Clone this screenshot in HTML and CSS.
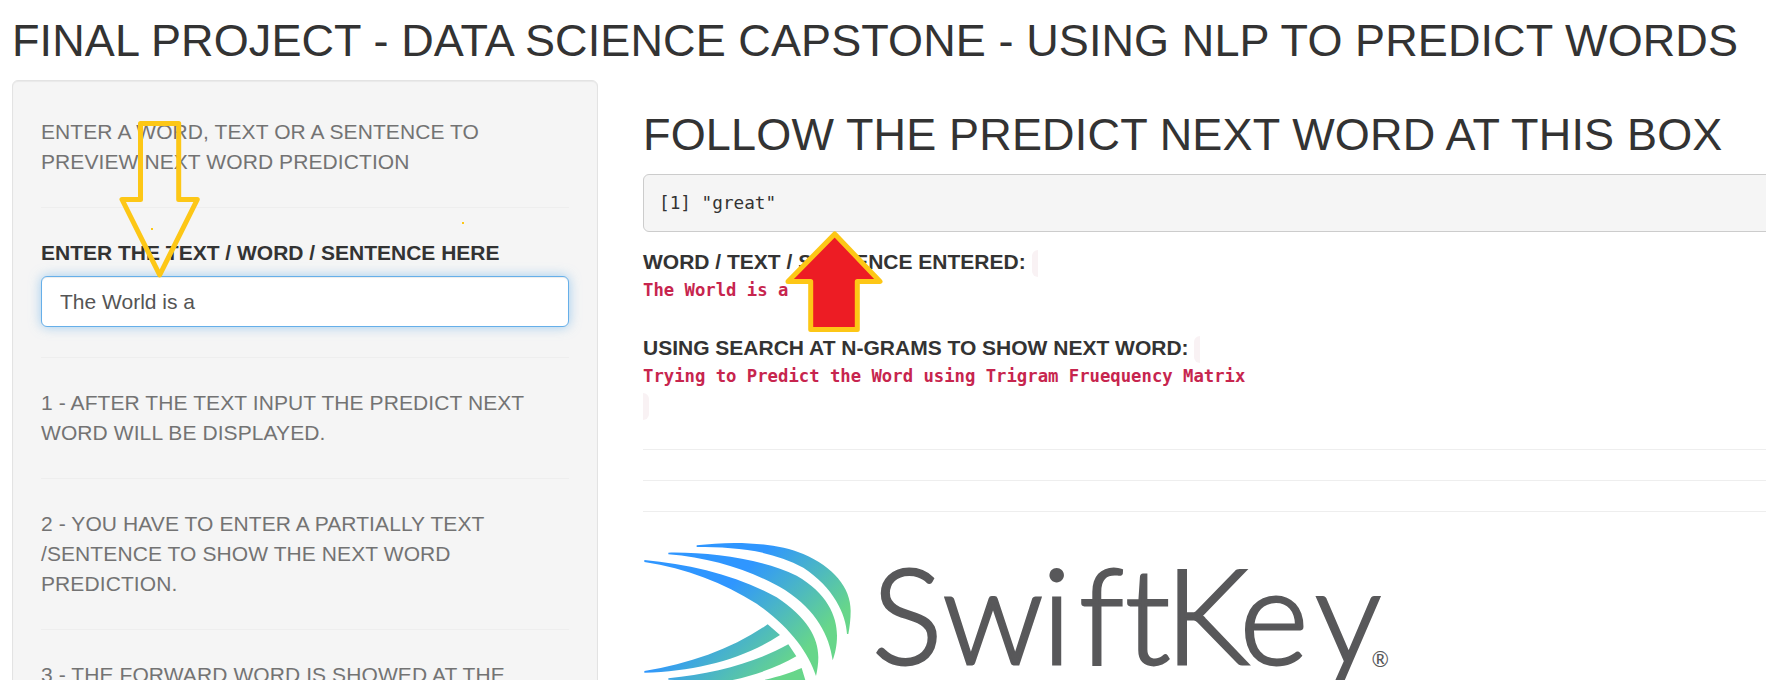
FILE: index.html
```html
<!DOCTYPE html>
<html lang="en">
<head>
<meta charset="utf-8">
<title>Final Project - Data Science Capstone</title>
<link rel="stylesheet" href="styles.css">
</head>
<body>
<div class="page">
  <h1 class="title">FINAL PROJECT - DATA SCIENCE CAPSTONE - USING NLP TO PREDICT WORDS</h1>
  <div class="columns">
    <aside class="sidebar">
      <p class="help">ENTER A WORD, TEXT OR A SENTENCE TO<br>PREVIEW NEXT WORD PREDICTION</p>
      <hr class="rule">
      <label class="label" for="entry">ENTER THE TEXT / WORD / SENTENCE HERE</label>
      <input class="entry" id="entry" type="text" value="The World is a">
      <hr class="rule">
      <p class="help">1 - AFTER THE TEXT INPUT THE PREDICT NEXT<br>WORD WILL BE DISPLAYED.</p>
      <hr class="rule">
      <p class="help">2 - YOU HAVE TO ENTER A PARTIALLY TEXT<br>/SENTENCE TO SHOW THE NEXT WORD<br>PREDICTION.</p>
      <hr class="rule">
      <p class="help">3 - THE FORWARD WORD IS SHOWED AT THE</p>
    </aside>
    <main class="main">
      <h1 class="heading">FOLLOW THE PREDICT NEXT WORD AT THIS BOX</h1>
      <pre class="output">[1] "great"</pre>
      <div class="result">
        <div class="name">WORD / TEXT / SENTENCE ENTERED: <span class="cap"></span></div>
        <code class="value">The World is a</code>
      </div>
      <div class="result">
        <div class="name">USING SEARCH AT N-GRAMS TO SHOW NEXT WORD: <span class="cap"></span></div>
        <code class="value">Trying to Predict the Word using Trigram Fruequency Matrix</code>
        <div class="tail"><span class="cap cap-end"></span></div>
      </div>
      <hr class="line">
      <hr class="line">
      <hr class="line">
      <svg class="logo" width="760" height="145" viewBox="643 540 760 145">
        <defs>
          <linearGradient id="sea" gradientUnits="userSpaceOnUse" x1="250" y1="250" x2="460" y2="460">
            <stop offset="0" stop-color="#2f96ff"/>
            <stop offset="1" stop-color="#67d68a"/>
          </linearGradient>
        </defs>
        <g transform="translate(630 520) scale(.33333)" fill="url(#sea)">
          <path d="M200 79C300 66 430 68 520 105C610 144 662 205 662 275C662 300 659 325 655 345L651 345C648 285 610 205 520 146C420 92 310 84 200 84Z"/>
          <path d="M115 101C240 99 390 118 500 170C590 221 621 290 621 350C621 380 615 405 608 424C598 350 560 275 465 213C370 157 250 117 115 106Z"/>
          <path d="M43 123C180 135 330 172 440 235C530 295 565 355 565 415C565 435 562 455 558 471C535 400 480 325 380 254C280 192 170 148 43 129Z"/>
          <path d="M43 456C180 434 310 388 413 316L450 348C340 420 200 456 43 461Z"/>
          <path d="M115 478C250 465 380 430 475 376L499 412C440 446 360 476 270 490L115 482Z"/>
          <path d="M405 482C450 472 485 460 515 447L528 490H405Z"/>
        </g>
        <g class="brand">
          <text y="665" x="872 942.500 1042 1079 1125 1165 1239.500 1315">SwiftKey</text>
          <text class="mark" x="1371.500" y="667.500">®</text>
        </g>
      </svg>
    </main>
  </div>
  <svg class="notes" width="1766" height="680" viewBox="0 0 1766 680">
    <path class="arrow" d="M140.500 123.500H178.700V199.500H197.300L159.700 275L122 199.500H140.500Z"/>
    <rect class="dot" x="151" y="228" width="2" height="2"/>
    <rect class="dot" x="462" y="222" width="2" height="2"/>
    <path class="arrow arrow-red" d="M834.700 234L880 281.500H857.300V329.500H810.700V281.500H788Z"/>
  </svg>
</div>
</body>
</html>
```
FILE: styles.css
```css
* { box-sizing: border-box; }
body {
  margin: 0;
  background: #fff;
  color: #333;
  font: 21px/30px "Liberation Sans", Arial, sans-serif;
}
.page {
  position: relative;
  width: 1766px;
  height: 680px;
  overflow: hidden;
  padding: 16px 0 0 12px;
}
.title, .heading {
  margin: 0;
  font-size: 45px;
  font-weight: 400;
  line-height: 50px;
  letter-spacing: .1px;
  white-space: nowrap;
}
.heading { letter-spacing: .17px; }
.columns {
  display: flex;
  align-items: flex-start;
  gap: 45px;
  padding-top: 14px;
}
.sidebar {
  flex: none;
  width: 586px;
  height: 640px;
  padding: 36px 28px;
  background: #f5f5f5;
  border: 1px solid #e3e3e3;
  border-radius: 6px;
  box-shadow: inset 0 1px 1px rgba(0, 0, 0, .05);
}
.help { margin: 0; color: #737373; letter-spacing: .09px; white-space: nowrap; }
.rule { margin: 30px 0; border: 0; border-top: 1px solid #eee; }
.label { display: block; margin-bottom: 8px; font-weight: 700; white-space: nowrap; }
.entry {
  display: block;
  width: 100%;
  height: 51px;
  padding: 0 18px;
  border: 1px solid #66afe9;
  border-radius: 6px;
  background: #fff;
  color: #555;
  font: 21px/30px "Liberation Sans", Arial, sans-serif;
  box-shadow: inset 0 1px 1px rgba(0, 0, 0, .075), 0 0 12px rgba(102, 175, 233, .6);
}
.main { flex: 1; min-width: 0; padding-top: 30px; }
.output {
  height: 58px;
  margin: 14px -20px 15px 0;
  padding: 13px 15px;
  background: #f5f5f5;
  border: 1px solid #ccc;
  border-radius: 6px;
  font: 17.700px/30px "DejaVu Sans Mono", monospace;
}
.result { margin-bottom: 28px; }
.name { height: 30px; font-weight: 700; }
.value {
  display: block;
  height: 28px;
  color: #c7254e;
  font: 700 17.260px/27px "DejaVu Sans Mono", monospace;
}
.tail { height: 31px; margin-top: -1px; }
.cap {
  display: inline-block;
  width: 6px;
  height: 27px;
  vertical-align: -8px;
  background: #f9f2f4;
  border-radius: 6px 0 0 6px;
}
.cap-end { border-radius: 0 6px 6px 0; }
.line { margin: 0 0 30px; border: 0; border-top: 1px solid #eee; }
.logo { display: block; margin-top: -3px; }
.brand { fill: #58585a; stroke: #58585a; stroke-width: 2.800; font: 300 132px Lato, sans-serif; }
.mark { font-size: 21px; font-weight: 400; stroke: none; }
.notes { position: absolute; left: 0; top: 0; pointer-events: none; }
.arrow { fill: none; stroke: #fdc716; stroke-width: 5; stroke-linejoin: round; }
.arrow-red { fill: #ed1c24; }
.dot { fill: #fdc716; }
```
